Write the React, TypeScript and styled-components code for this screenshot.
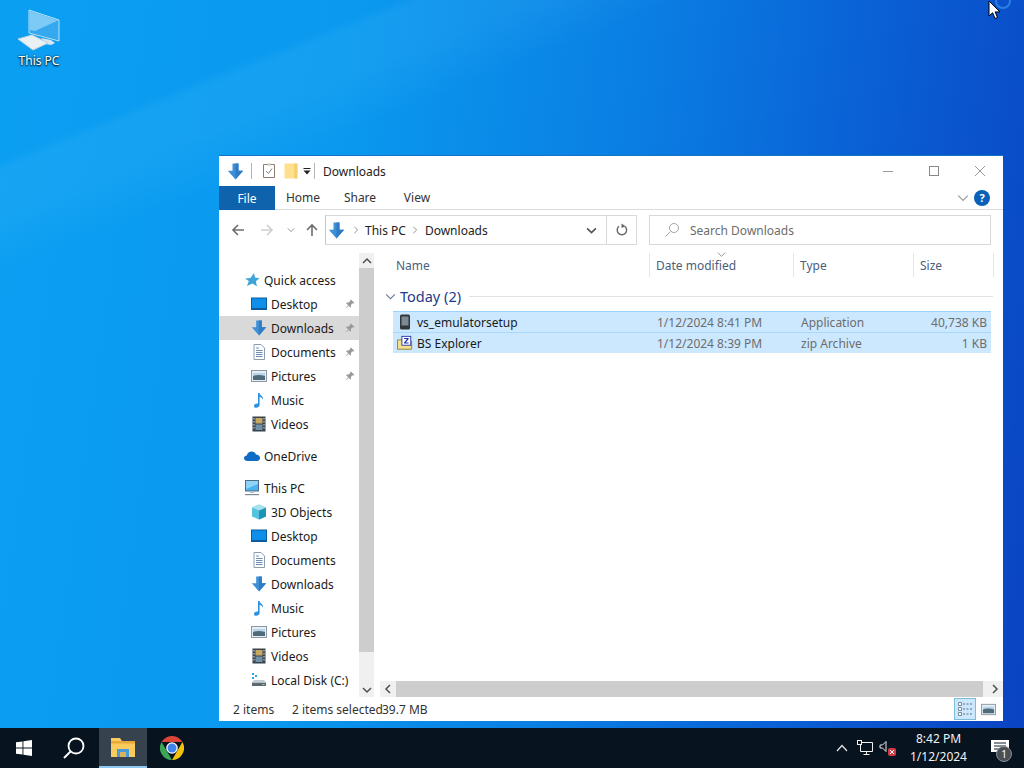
import React from 'react'
import styled, { createGlobalStyle } from 'styled-components'

const FONT = '"Noto Sans", "Open Sans", "Liberation Sans", sans-serif'

const GlobalStyle = createGlobalStyle`
  html, body {
    margin: 0;
    padding: 0;
    overflow: hidden;
    font-family: ${FONT};
    font-size: 12px;
  }
  * {
    box-sizing: border-box;
  }
`

type IconProps = { size?: number }

const ArrowDownIcon = ({ size = 16 }: IconProps) => (
  <svg width={size} height={size} viewBox="0 0 16 16">
    <path d="M5.2 0.5h5.6v6.8h4.4L8 15.5 0.8 7.3h4.4z" fill="#3d8fd6" />
    <path d="M8 0.5h2.8v6.8h4.4L8 15.5z" fill="#2f7cc4" />
  </svg>
)
const StarIcon = ({ size = 16 }: IconProps) => (
  <svg width={size} height={size} viewBox="0 0 16 16">
    <path d="M10 1l1 4.6 4.5.6-3.6 3 1 5-4.4-2.7L3 14l1.8-5L1 6.400l5.400-.4z" fill="#3fa4d8" />
  </svg>
)
const MonitorBlue = ({ size = 16 }: IconProps) => (
  <svg width={size} height={size} viewBox="0 0 16 16">
    <rect x="0.500" y="2" width="15" height="11.500" fill="#0f8fe8" stroke="#0b5c9e" />
    <path d="M1 12h14v1H1z" fill="#0b5c9e" />
  </svg>
)
const DocIcon = ({ size = 16 }: IconProps) => (
  <svg width={size} height={size} viewBox="0 0 16 16">
    <path d="M3 0.500h7l3.500 3.500v11.500H3z" fill="#fff" stroke="#8d9db0" />
    <path d="M5 4h3M5 6.500h6.500M5 8.500h6.500M5 10.500h6.500M5 12.500h6.500" stroke="#6d8fb5" />
  </svg>
)
const PictureIcon = ({ size = 16 }: IconProps) => (
  <svg width={size} height={size} viewBox="0 0 16 16">
    <rect x="0.500" y="2.500" width="15" height="11" fill="#e6eef4" stroke="#8b98a5" />
    <path d="M2 5h12v3H2z" fill="#b9d4e8" />
    <path d="M2 8c4-1.500 8-1 12 0v4H2z" fill="#4f6a78" />
  </svg>
)
const MusicIcon = ({ size = 16 }: IconProps) => (
  <svg width={size} height={size} viewBox="0 0 16 16">
    <path d="M7 1h1.600c.4 2.600 4 3.300 3.400 7-.5-1.800-1.800-2.700-3.400-3v8c0 1.800-1.700 2.800-3.400 2.800-1.400 0-2.200-.9-2.200-1.900 0-1.500 1.800-2.700 4-2.300z" fill="#2b93e0" />
  </svg>
)
const VideoIcon = ({ size = 16 }: IconProps) => (
  <svg width={size} height={size} viewBox="0 0 16 16">
    <rect x="1.500" y="0.500" width="13" height="15" fill="#39434d" />
    <rect x="4.500" y="2" width="7" height="5.500" fill="#c7a862" />
    <rect x="4.500" y="8.500" width="7" height="5.500" fill="#6f92a8" />
    <path d="M2.500 2h1v1.500h-1zM2.500 5h1v1.500h-1zM2.500 8h1v1.500h-1zM2.500 11h1v1.500h-1zM12.500 2h1v1.500h-1zM12.500 5h1v1.500h-1zM12.500 8h1v1.500h-1zM12.500 11h1v1.500h-1z" fill="#dfe5ea" />
  </svg>
)
const CloudIcon = ({ size = 16 }: IconProps) => (
  <svg width={size} height={size} viewBox="0 0 16 16">
    <path d="M3.500 13C1.500 13 0 11.800 0 10.200c0-1.500 1.200-2.600 2.800-2.700C3.400 5 5.400 3.500 7.600 3.500c2 0 3.700 1.100 4.400 3 2.200 0 4 1.500 4 3.400 0 1.800-1.400 3.100-3.200 3.100z" fill="#0f6cc4" />
  </svg>
)
const MonitorPc = ({ size = 16 }: IconProps) => (
  <svg width={size} height={size} viewBox="0 0 16 16">
    <rect x="1.500" y="0.500" width="13" height="10.500" fill="#4cb3ee" stroke="#4f6d85" />
    <path d="M2 1h12v3L2 9z" fill="#8fd3f7" />
    <path d="M6 11h4v2H6z" fill="#b4bec6" />
    <path d="M1 14h14v1.200H1z" fill="#7f8c98" />
  </svg>
)
const CubeIcon = ({ size = 16 }: IconProps) => (
  <svg width={size} height={size} viewBox="0 0 16 16">
    <path d="M8 0.500l7 3v9l-7 3-7-3v-9z" fill="#55c3dd" />
    <path d="M8 6.500l7-3v9l-7 3z" fill="#1f93b8" />
    <path d="M8 0.500l7 3-7 3-7-3z" fill="#a6e2ee" />
  </svg>
)
const DiskIcon = ({ size = 16 }: IconProps) => (
  <svg width={size} height={size} viewBox="0 0 16 16">
    <path d="M1 1h2v2H1zM4 3h2v2H4zM1 5h2v2H1z" fill="#2ba7d8" />
    <path d="M1 10.500h14v3.500H1z" fill="#5d6870" />
    <path d="M3 8h10l2 2.500H1z" fill="#c3ccd2" />
    <path d="M11.500 12h2v1h-2z" fill="#9fe07a" />
  </svg>
)
const PinIcon = () => (
  <svg width="10" height="10" viewBox="0 0 10 10">
    <path d="M6 0.500l3.500 3.500-1 .6-.8-.3-1.800 1.800.1 1.900-.8.500L1 3.900l1-.5 1.600.2 1.800-1.800-.2-.9z" fill="#9a9a9a" />
    <path d="M2.800 6.400L0.500 9.500l3-2.300z" fill="#9a9a9a" />
  </svg>
)
const Chevron = ({ dir = 'down', size = 10, color = '#444', weight = 1 }: { dir?: 'down' | 'up' | 'left' | 'right'; size?: number; color?: string; weight?: number }) => {
  const points = {
    down: '1,3 5,7 9,3',
    up: '1,7 5,3 9,7',
    left: '7,1 3,5 7,9',
    right: '3,1 7,5 3,9',
  }[dir]
  return (
    <svg width={size} height={size} viewBox="0 0 10 10">
      <polyline points={points} fill="none" stroke={color} strokeWidth={weight} />
    </svg>
  )
}
const NavArrow = ({ dir, color }: { dir: 'left' | 'right' | 'up'; color: string }) => {
  const d = {
    left: 'M13 7H2M7 2L2 7l5 5',
    right: 'M1 7h11M7 2l5 5-5 5',
    up: 'M7 13V2M2 7l5-5 5 5',
  }[dir]
  return (
    <svg width="14" height="14" viewBox="0 0 14 14">
      <path d={d} fill="none" stroke={color} strokeWidth="1.600" />
    </svg>
  )
}

type NavEntry = { label: string; icon: React.ReactNode; pinned?: boolean; active?: boolean }

const quickAccess: NavEntry[] = [
  { label: 'Desktop', icon: <MonitorBlue />, pinned: true },
  { label: 'Downloads', icon: <ArrowDownIcon />, pinned: true, active: true },
  { label: 'Documents', icon: <DocIcon />, pinned: true },
  { label: 'Pictures', icon: <PictureIcon />, pinned: true },
  { label: 'Music', icon: <MusicIcon /> },
  { label: 'Videos', icon: <VideoIcon /> },
]
const thisPc: NavEntry[] = [
  { label: '3D Objects', icon: <CubeIcon /> },
  { label: 'Desktop', icon: <MonitorBlue /> },
  { label: 'Documents', icon: <DocIcon /> },
  { label: 'Downloads', icon: <ArrowDownIcon /> },
  { label: 'Music', icon: <MusicIcon /> },
  { label: 'Pictures', icon: <PictureIcon /> },
  { label: 'Videos', icon: <VideoIcon /> },
  { label: 'Local Disk (C:)', icon: <DiskIcon /> },
]

const NavItem = ({ entry }: { entry: NavEntry }) => (
  <NavRow $active={entry.active}>
    <NavIcon>{entry.icon}</NavIcon>
    <span>{entry.label}</span>
    {entry.pinned && <PinSlot><PinIcon /></PinSlot>}
  </NavRow>
)

const files = [
  {
    name: 'vs_emulatorsetup',
    date: '1/12/2024 8:41 PM',
    type: 'Application',
    size: '40,738 KB',
    icon: (
      <svg width="16" height="16" viewBox="0 0 16 16">
        <rect x="3" y="0.500" width="10" height="15" rx="1.500" fill="#33373b" />
        <rect x="4.500" y="2.500" width="7" height="9" fill="#7d8a94" />
      </svg>
    ),
  },
  {
    name: 'BS Explorer',
    date: '1/12/2024 8:39 PM',
    type: 'zip Archive',
    size: '1 KB',
    icon: (
      <svg width="18" height="16" viewBox="0 0 18 16">
        <path d="M0.500 4.500h5l1 1.500h10v9h-16z" fill="#f3e08c" stroke="#8a7b3c" />
        <rect x="5.500" y="0.500" width="10" height="10" fill="#fff" stroke="#1f2fa8" />
        <path d="M8 2.500h5v1.200l-3.200 3.800H13v1H8V7.300l3.200-3.800H8z" fill="#1f2fa8" />
      </svg>
    ),
  },
]

export default function App(): React.ReactElement {
  return (
    <>
      <GlobalStyle />
      <Screen>
        <Wallpaper>
          <DesktopIcon>
            <svg width="48" height="44" viewBox="0 0 48 44">
              <path d="M14 1l30 10v21L14 24z" fill="#35a8f0" stroke="#b7e2f8" />
              <path d="M15 2l28 9.500L20 22l-5-1z" fill="#7ccaf5" />
              <path d="M26 29l10 2 4 3-4 2-12-2 4-2z" fill="#d7e6ef" />
              <path d="M3 30l14-4 16 8-15 7z" fill="#e9f1f5" stroke="#c0d2de" />
            </svg>
            <DesktopLabel>This PC</DesktopLabel>
          </DesktopIcon>

          <BusyRing />
          <Cursor>
            <svg width="14" height="20" viewBox="0 0 14 20">
              <path d="M1 1v15l3.600-3.200 2.400 5.700 2.500-1-2.400-5.600H12z" fill="#fff" stroke="#000" />
            </svg>
          </Cursor>

          <Window>
            <TitleBar>
              <QuickIcon><ArrowDownIcon size={17} /></QuickIcon>
              <TitleSep />
              <QuickIcon>
                <svg width="14" height="16" viewBox="0 0 14 16">
                  <path d="M1.500 1.500h11v13h-11z" fill="#fff" stroke="#8a7c70" />
                  <path d="M4 8l2.500 2.500L10 5.500" fill="none" stroke="#8a7c70" />
                  <path d="M5 0.500h4v2H5z" fill="#c9c2bb" />
                </svg>
              </QuickIcon>
              <QuickIcon>
                <svg width="14" height="16" viewBox="0 0 14 16">
                  <rect x="0.500" y="0.500" width="13" height="15" rx="1" fill="#ffe08f" />
                  <path d="M10 0.500h3.500v15H10z" fill="#f7d070" />
                </svg>
              </QuickIcon>
              <QuickDrop>
                <svg width="8" height="8" viewBox="0 0 8 8">
                  <path d="M0.500 1h7v1h-7zM0.500 3.500h7L4 7.500z" fill="#222" />
                </svg>
              </QuickDrop>
              <TitleSep />
              <WindowTitle>Downloads</WindowTitle>
              <WindowControls>
                <WindowButton>
                  <svg width="10" height="10" viewBox="0 0 10 10"><path d="M0 5.500h10" stroke="#999" /></svg>
                </WindowButton>
                <WindowButton>
                  <svg width="10" height="10" viewBox="0 0 10 10"><rect x="0.500" y="0.500" width="9" height="9" fill="none" stroke="#888" /></svg>
                </WindowButton>
                <WindowButton>
                  <svg width="10" height="10" viewBox="0 0 10 10"><path d="M0 0l10 10M10 0L0 10" stroke="#999" /></svg>
                </WindowButton>
              </WindowControls>
            </TitleBar>

            <RibbonTabs>
              <FileTab>File</FileTab>
              <RibbonTab $width={56}>Home</RibbonTab>
              <RibbonTab $width={58}>Share</RibbonTab>
              <RibbonTab $width={56}>View</RibbonTab>
              <RibbonRight>
                <Chevron size={12} color="#9a9a9a" />
                <HelpBadge>?</HelpBadge>
              </RibbonRight>
            </RibbonTabs>

            <AddressRow>
              <NavButton $width={24}><NavArrow dir="left" color="#6d6d6d" /></NavButton>
              <NavButton $width={34}><NavArrow dir="right" color="#d0d0d0" /></NavButton>
              <NavButton $width={14}><Chevron size={8} color="#777" /></NavButton>
              <NavButton $width={28}><NavArrow dir="up" color="#6d6d6d" /></NavButton>
              <AddressBox>
                <AddressIcon><ArrowDownIcon size={17} /></AddressIcon>
                <Crumb><Chevron dir="right" size={8} color="#777" /></Crumb>
                <CrumbText>This PC</CrumbText>
                <Crumb><Chevron dir="right" size={8} color="#777" /></Crumb>
                <CrumbText>Downloads</CrumbText>
                <AddressDrop><Chevron size={11} color="#555" weight={1.500} /></AddressDrop>
                <RefreshButton>
                  <svg width="14" height="14" viewBox="0 0 14 14">
                    <path d="M9.800 3.300A4.700 4.700 0 1 1 4 3.300" fill="none" stroke="#666" strokeWidth="1.400" />
                    <path d="M6.500 0.500L10.500 3.200 6.500 5z" fill="#666" />
                  </svg>
                </RefreshButton>
              </AddressBox>
              <SearchBox>
                <svg width="16" height="16" viewBox="0 0 16 16">
                  <circle cx="10" cy="6" r="4.500" fill="none" stroke="#a5a5a5" />
                  <path d="M6.500 9.500L1.500 14.500" stroke="#a5a5a5" />
                </svg>
                <SearchText>Search Downloads</SearchText>
              </SearchBox>
            </AddressRow>

            <WindowBody>
              <NavPane>
                <NavList>
                  <NavRoot><NavIcon><StarIcon /></NavIcon><span>Quick access</span></NavRoot>
                  {quickAccess.map((entry) => <NavItem key={entry.label} entry={entry} />)}
                  <NavRoot $gap><NavIcon><CloudIcon /></NavIcon><span>OneDrive</span></NavRoot>
                  <NavRoot $gap><NavIcon><MonitorPc /></NavIcon><span>This PC</span></NavRoot>
                  {thisPc.map((entry) => <NavItem key={entry.label} entry={entry} />)}
                </NavList>
                <VScroll>
                  <ScrollArrow><Chevron dir="up" size={10} color="#505050" weight={1.500} /></ScrollArrow>
                  <VThumb />
                  <ScrollArrow><Chevron size={10} color="#505050" weight={1.500} /></ScrollArrow>
                </VScroll>
              </NavPane>

              <Main>
                <ColumnHeader>
                  <ColumnCell $width={260}>Name</ColumnCell>
                  <ColumnCell $width={144}>
                    <SortMark><Chevron size={9} color="#8a8a8a" /></SortMark>
                    Date modified
                  </ColumnCell>
                  <ColumnCell $width={120}>Type</ColumnCell>
                  <ColumnCell $width={80}>Size</ColumnCell>
                </ColumnHeader>
                <GroupHeader>
                  <Chevron size={11} color="#6b7a99" />
                  <GroupTitle>Today (2)</GroupTitle>
                  <GroupLine />
                </GroupHeader>
                <FileList>
                  {files.map((file) => (
                    <FileRow key={file.name}>
                      <FileName>
                        <FileIcon>{file.icon}</FileIcon>
                        {file.name}
                      </FileName>
                      <FileMeta>{file.date}</FileMeta>
                      <FileMeta>{file.type}</FileMeta>
                      <FileSize>{file.size}</FileSize>
                    </FileRow>
                  ))}
                </FileList>
                <HScroll>
                  <HArrow><Chevron dir="left" size={10} color="#505050" weight={1.500} /></HArrow>
                  <HThumb />
                  <HArrow><Chevron dir="right" size={10} color="#505050" weight={1.500} /></HArrow>
                </HScroll>
              </Main>
            </WindowBody>

            <StatusBar>
              <StatusText $width={59}>2 items</StatusText>
              <StatusText $width={90}>2 items selected</StatusText>
              <StatusText $width={60}>39.7 MB</StatusText>
              <ViewButtons>
                <ViewButton $active>
                  <svg width="16" height="16" viewBox="0 0 16 16">
                    <path d="M1.500 1.500h3v3h-3zM1.500 6.500h3v3h-3zM1.500 11.500h3v3h-3z" fill="#fff" stroke="#7a8a99" />
                    <path d="M6 3h2M9.500 3h2M13 3h2M6 8h2M9.500 8h2M13 8h2M6 13h2M9.500 13h2M13 13h2" stroke="#5d6d7c" />
                  </svg>
                </ViewButton>
                <ViewButton>
                  <PictureIcon size={15} />
                </ViewButton>
              </ViewButtons>
            </StatusBar>
          </Window>
        </Wallpaper>

        <Taskbar>
          <TaskButton $width={48}>
            <svg width="16" height="16" viewBox="0 0 16 16">
              <path d="M0 2.300l6.500-.9v6.200H0zM7.400 1.300L16 0v7.600H7.400zM0 8.400h6.500v6.200L0 13.700zM7.400 8.400H16V16l-8.600-1.200z" fill="#fff" />
            </svg>
          </TaskButton>
          <TaskButton $width={51}>
            <svg width="22" height="22" viewBox="0 0 22 22">
              <circle cx="13" cy="9" r="7.500" fill="none" stroke="#fff" strokeWidth="1.800" />
              <path d="M7.500 14.500L1 21" stroke="#fff" strokeWidth="2" />
            </svg>
          </TaskButton>
          <ActiveTask>
            <svg width="24" height="20" viewBox="0 0 24 20">
              <path d="M0 1h9l2 3h13v16H0z" fill="#f9ca5c" />
              <path d="M0 4h24v2.500H0z" fill="#e8a93c" />
              <path d="M6 12h12v8H6z" fill="#4a9ad8" />
              <path d="M9 15h6v5H9z" fill="#d8b45e" />
            </svg>
          </ActiveTask>
          <TaskButton $width={50}>
            <svg width="24" height="24" viewBox="0 0 24 24">
              <path d="M1.600 6A12 12 0 0 1 22.400 6H12z" fill="#db4437" />
              <path d="M22.400 6A12 12 0 0 1 12 24l5.200-9z" fill="#f4c20d" />
              <path d="M12 24A12 12 0 0 1 1.600 6l5.200 9z" fill="#3aa757" />
              <circle cx="12" cy="12" r="5.800" fill="#fff" />
              <circle cx="12" cy="12" r="4.500" fill="#3f83ec" />
            </svg>
          </TaskButton>
          <Tray>
            <TrayIcon $width={23}>
              <svg width="12" height="8" viewBox="0 0 12 8"><path d="M1 7l5-5.500L11 7" fill="none" stroke="#e8e8e8" strokeWidth="1.200" /></svg>
            </TrayIcon>
            <TrayIcon $width={23}>
              <svg width="16" height="16" viewBox="0 0 16 16">
                <path d="M3.500 2.500h12v9h-12zM9.500 11.500v3M6.500 14.500h6" fill="none" stroke="#f2f2f2" />
                <rect x="0.500" y="0.500" width="4" height="4" fill="#111" stroke="#f2f2f2" />
              </svg>
            </TrayIcon>
            <TrayIcon $width={23}>
              <svg width="18" height="16" viewBox="0 0 18 16">
                <path d="M1 5h2.500L7 1.500v10L3.500 8H1z" fill="none" stroke="#e8e8e8" />
                <rect x="9" y="8" width="8" height="8" rx="2" fill="#d23b46" />
                <path d="M11 10l4 4M15 10l-4 4" stroke="#fff" />
              </svg>
            </TrayIcon>
            <Clock>
              <span>8:42 PM</span>
              <span>1/12/2024</span>
            </Clock>
            <NotifyButton>
              <svg width="18" height="16" viewBox="0 0 18 16">
                <path d="M0 0h18v12h-9l-3 3.500V12H0z" fill="#fff" />
                <path d="M3 3h12M3 6h12M3 9h8" stroke="#10202e" />
              </svg>
              <NotifyBadge>1</NotifyBadge>
            </NotifyButton>
          </Tray>
        </Taskbar>
      </Screen>
    </>
  )
}

const Screen = styled.div`
  width: 1024px;
  height: 768px;
  display: flex;
  flex-direction: column;
  overflow: hidden;
`
const Wallpaper = styled.div`
  position: relative;
  flex: 1;
  background:
    linear-gradient(158deg, transparent 0 14%, rgba(120, 210, 255, 0.1) 15% 19%, transparent 24%),
    linear-gradient(98deg, #0b9ff2 0%, #0a99ef 32%, #0a7ee3 58%, #0a5bd2 82%, #0a43c2 100%);
`
const DesktopIcon = styled.div`
  position: absolute;
  left: 14px;
  top: 9px;
  width: 50px;
  display: flex;
  flex-direction: column;
  align-items: center;
`
const DesktopLabel = styled.div`
  margin-top: 0;
  color: #fff;
  line-height: 16px;
  text-shadow: 0 1px 2px #000, 0 0 2px rgba(0, 0, 0, 0.7);
`
const BusyRing = styled.div`
  position: absolute;
  left: 995px;
  top: -7px;
  width: 16px;
  height: 16px;
  border: 2px solid #2b7fe0;
  border-radius: 50%;
`
const Cursor = styled.div`
  position: absolute;
  left: 988px;
  top: 0;
`
const Window = styled.div`
  position: absolute;
  left: 219px;
  top: 155px;
  width: 784px;
  height: 566px;
  display: flex;
  flex-direction: column;
  background: #fff;
  border-top: 1px solid #1573c4;
  color: #1a1a1a;
`
const TitleBar = styled.div`
  height: 30px;
  flex-shrink: 0;
  display: flex;
  align-items: center;
  padding-left: 7px;
`
const QuickIcon = styled.div`
  width: 18px;
  height: 18px;
  display: flex;
  align-items: center;
  justify-content: center;
  margin-right: 4px;
`
const QuickDrop = styled.div`
  width: 8px;
  display: flex;
  margin-left: -1px;
`
const TitleSep = styled.div`
  width: 1px;
  height: 16px;
  background: #b5b5b5;
  margin: 0 8px 0 3px;
`
const WindowTitle = styled.div`
  color: #222;
`
const WindowControls = styled.div`
  margin-left: auto;
  height: 100%;
  display: flex;
`
const WindowButton = styled.div`
  width: 46px;
  display: flex;
  align-items: center;
  justify-content: center;
`
const RibbonTabs = styled.div`
  height: 24px;
  flex-shrink: 0;
  display: flex;
  align-items: stretch;
  border-bottom: 1px solid #dadbdc;
`
const FileTab = styled.div`
  width: 56px;
  background: #0f63ad;
  color: #fff;
  display: flex;
  align-items: center;
  justify-content: center;
  margin-bottom: -1px;
`
const RibbonTab = styled.div<{ $width: number }>`
  width: ${({ $width }) => $width}px;
  color: #333;
  display: flex;
  align-items: center;
  justify-content: center;
`
const RibbonRight = styled.div`
  margin-left: auto;
  width: 44px;
  display: flex;
  align-items: center;
  gap: 5px;
  padding-left: 0;
  margin-right: 2px;
`
const HelpBadge = styled.div`
  width: 16px;
  height: 16px;
  border-radius: 50%;
  background: #0a62b8;
  color: #fff;
  font-size: 11px;
  font-weight: 700;
  line-height: 16px;
  text-align: center;
`
const AddressRow = styled.div`
  height: 40px;
  flex-shrink: 0;
  display: flex;
  align-items: flex-start;
  padding: 5px 12px 0 7px;
`
const NavButton = styled.div<{ $width: number }>`
  width: ${({ $width }) => $width}px;
  height: 30px;
  display: flex;
  align-items: center;
  justify-content: center;
`
const AddressBox = styled.div`
  width: 312px;
  height: 30px;
  margin-left: -1px;
  border: 1px solid #d9d9d9;
  border-left-color: #c6c6c6;
  display: flex;
  align-items: center;
  color: #222;
`
const AddressIcon = styled.div`
  width: 20px;
  display: flex;
  justify-content: center;
`
const Crumb = styled.div`
  width: 19px;
  display: flex;
  justify-content: center;
`
const CrumbText = styled.span``
const AddressDrop = styled.div`
  margin-left: auto;
  width: 30px;
  display: flex;
  justify-content: center;
`
const RefreshButton = styled.div`
  width: 30px;
  height: 100%;
  border-left: 1px solid #d9d9d9;
  display: flex;
  align-items: center;
  justify-content: center;
`
const SearchBox = styled.div`
  width: 342px;
  height: 30px;
  margin-left: 12px;
  border: 1px solid #d9d9d9;
  display: flex;
  align-items: center;
  padding-left: 14px;
  gap: 10px;
`
const SearchText = styled.span`
  color: #6d6d6d;
`
const WindowBody = styled.div`
  flex: 1;
  min-height: 0;
  display: flex;
`
const NavPane = styled.div`
  width: 155px;
  flex-shrink: 0;
  display: flex;
`
const NavList = styled.div`
  width: 140px;
  padding-top: 18px;
  overflow: hidden;
`
const NavRow = styled.div<{ $active?: boolean }>`
  height: 24px;
  display: flex;
  align-items: center;
  gap: 4px;
  padding-left: 32px;
  background: ${({ $active }) => ($active ? '#d9d9d9' : 'transparent')};
  white-space: nowrap;
`
const NavRoot = styled.div<{ $gap?: boolean }>`
  height: 24px;
  display: flex;
  align-items: center;
  gap: 4px;
  padding-left: 25px;
  margin-top: ${({ $gap }) => ($gap ? '8px' : '0')};
`
const NavIcon = styled.div`
  width: 16px;
  height: 16px;
  flex-shrink: 0;
  display: flex;
`
const PinSlot = styled.div`
  margin-left: auto;
  padding-right: 4px;
  display: flex;
`
const VScroll = styled.div`
  width: 15px;
  margin-top: 3px;
  background: #f0f0f0;
  display: flex;
  flex-direction: column;
`
const ScrollArrow = styled.div`
  height: 15px;
  flex-shrink: 0;
  display: flex;
  align-items: center;
  justify-content: center;
`
const VThumb = styled.div`
  height: 384px;
  background: #cdcdcd;
  margin-bottom: auto;
`
const Main = styled.div`
  flex: 1;
  min-width: 0;
  display: flex;
  flex-direction: column;
`
const ColumnHeader = styled.div`
  height: 24px;
  margin-top: 3px;
  margin-left: 16px;
  flex-shrink: 0;
  display: flex;
  color: #4c607a;
`
const ColumnCell = styled.div<{ $width: number }>`
  position: relative;
  width: ${({ $width }) => $width}px;
  padding-left: 6px;
  border-right: 1px solid #e5e5e5;
  display: flex;
  align-items: center;
`
const SortMark = styled.div`
  position: absolute;
  top: -3px;
  left: 67px;
  display: flex;
`
const GroupHeader = styled.div`
  height: 22px;
  margin: 8px 10px 4px 11px;
  flex-shrink: 0;
  display: flex;
  align-items: center;
`
const GroupTitle = styled.div`
  margin-left: 4px;
  font-size: 14.500px;
  color: #1e3a8a;
`
const GroupLine = styled.div`
  flex: 1;
  height: 1px;
  margin-left: 8px;
  background: #e2e2e2;
`
const FileList = styled.div`
  flex: 1;
  margin: 0 12px 0 19px;
`
const FileRow = styled.div`
  height: 21px;
  display: grid;
  grid-template-columns: 264px 144px 120px 66px;
  align-items: center;
  background: #cce8ff;
  border-top: 1px solid #99d1ff;
  &:last-child {
    border-top-color: #a9d8ff;
  }
`
const FileName = styled.div`
  display: flex;
  align-items: center;
  gap: 4px;
  padding-left: 4px;
  color: #1a1a1a;
`
const FileIcon = styled.div`
  width: 16px;
  height: 16px;
  display: flex;
`
const FileMeta = styled.div`
  color: #6d6d6d;
`
const FileSize = styled.div`
  color: #6d6d6d;
  text-align: right;
`
const HScroll = styled.div`
  height: 16px;
  margin-left: 6px;
  flex-shrink: 0;
  display: flex;
  background: #f0f0f0;
`
const HArrow = styled.div`
  width: 16px;
  display: flex;
  align-items: center;
  justify-content: center;
`
const HThumb = styled.div`
  width: 587px;
  background: #cdcdcd;
  margin-right: auto;
`
const StatusBar = styled.div`
  height: 24px;
  flex-shrink: 0;
  display: flex;
  align-items: center;
  padding-left: 14px;
  color: #333;
`
const StatusText = styled.div<{ $width: number }>`
  width: ${({ $width }) => $width}px;
  white-space: nowrap;
`
const ViewButtons = styled.div`
  margin-left: auto;
  margin-right: 4px;
  display: flex;
  gap: 1px;
`
const ViewButton = styled.div<{ $active?: boolean }>`
  width: 22px;
  height: 22px;
  display: flex;
  align-items: center;
  justify-content: center;
  background: ${({ $active }) => ($active ? '#cce8ff' : 'transparent')};
  border: 1px solid ${({ $active }) => ($active ? '#7fbcd8' : 'transparent')};
`
const Taskbar = styled.div`
  height: 40px;
  flex-shrink: 0;
  display: flex;
  background: #07131f;
`
const TaskButton = styled.div<{ $width: number }>`
  width: ${({ $width }) => $width}px;
  display: flex;
  align-items: center;
  justify-content: center;
`
const ActiveTask = styled.div`
  width: 48px;
  display: flex;
  align-items: center;
  justify-content: center;
  background: #36434e;
  border-bottom: 2px solid #8cc8f0;
`
const Tray = styled.div`
  margin-left: auto;
  display: flex;
  align-items: stretch;
`
const TrayIcon = styled.div<{ $width: number }>`
  width: ${({ $width }) => $width}px;
  display: flex;
  align-items: center;
  justify-content: center;
`
const Clock = styled.div`
  width: 75px;
  margin-left: 2px;
  display: flex;
  flex-direction: column;
  align-items: center;
  justify-content: center;
  color: #f2f2f2;
  line-height: 18px;
`
const NotifyButton = styled.div`
  position: relative;
  width: 48px;
  display: flex;
  align-items: center;
  justify-content: center;
`
const NotifyBadge = styled.div`
  position: absolute;
  left: 20px;
  top: 18px;
  width: 16px;
  height: 16px;
  border-radius: 50%;
  background: #4a4f55;
  border: 1px solid #8a8f94;
  color: #fff;
  font-size: 10px;
  line-height: 14px;
  text-align: center;
`
